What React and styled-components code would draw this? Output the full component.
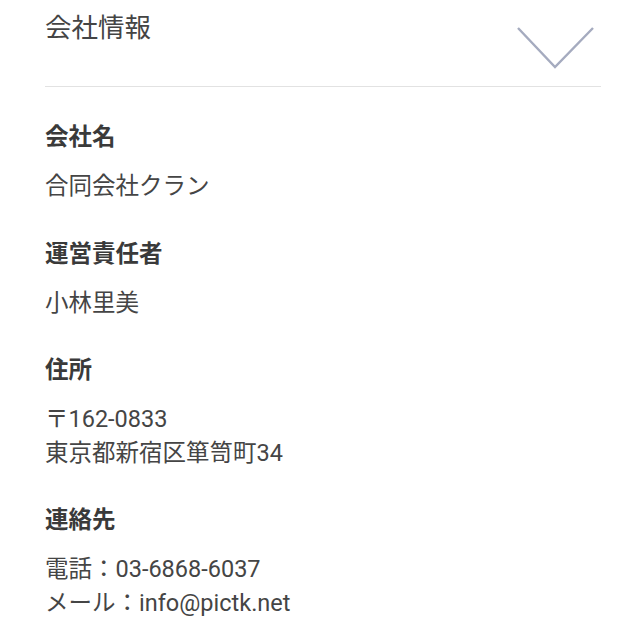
import React from 'react';
import styled, { createGlobalStyle } from 'styled-components';

const GlobalStyle = createGlobalStyle`
  body {
    margin: 0;
    background: #ffffff;
    font-family: Roboto, "Noto Sans CJK JP", sans-serif;
    color: #424242;
  }
`;

const Page = styled.div`
  padding: 0 22px 0 45px;
`;

const Header = styled.div`
  display: flex;
  justify-content: space-between;
  align-items: flex-start;
  height: 87px;
  box-sizing: border-box;
  border-bottom: 1px solid #e2e2e2;
`;

const Title = styled.h2`
  margin: 0;
  padding-top: 8px;
  font-size: 26.5px;
  font-weight: 400;
  line-height: 39px;
  color: #444444;
`;

const Chevron = styled.svg`
  margin-top: 27px;
  margin-right: 6px;
`;

const Body = styled.div`
  padding-top: 33px;
`;

const Section = styled.section`
  margin-bottom: 33px;
`;

const Label = styled.h3`
  margin: 0;
  font-size: 23.5px;
  font-weight: 700;
  line-height: 34px;
  color: #3a3a3a;
`;

const Value = styled.p`
  margin: 16px 0 0;
  font-size: 23.5px;
  font-weight: 400;
  line-height: 33.5px;
  color: #454545;
`;

const items = [
  { label: '会社名', lines: ['合同会社クラン'] },
  { label: '運営責任者', lines: ['小林里美'] },
  { label: '住所', lines: ['〒162-0833', '東京都新宿区箪笥町34'] },
  { label: '連絡先', lines: ['電話：03-6868-6037', 'メール：info@pictk.net'] },
];

const App = () => {
  return (
    <>
      <GlobalStyle />
      <Page>
        <Header>
          <Title>会社情報</Title>
          <Chevron width="78" height="42" viewBox="0 0 78 42">
            <polyline
              points="1,1 38,40 76,1"
              fill="none"
              stroke="#a5abbf"
              strokeWidth="2.4"
            />
          </Chevron>
        </Header>
        <Body>
          {items.map((item) => (
            <Section key={item.label}>
              <Label>{item.label}</Label>
              <Value>
                {item.lines.map((line, i) => (
                  <React.Fragment key={i}>
                    {i > 0 && <br />}
                    {line}
                  </React.Fragment>
                ))}
              </Value>
            </Section>
          ))}
        </Body>
      </Page>
    </>
  );
};

export default App;
